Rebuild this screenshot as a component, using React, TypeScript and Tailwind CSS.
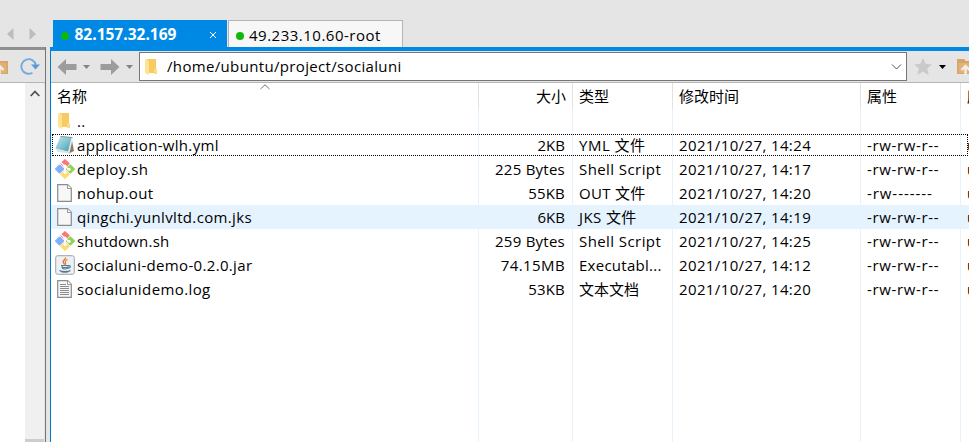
import type { ReactNode } from "react";

const font = "font-['Open_Sans','Noto_Sans_CJK_SC',sans-serif]";

type Kind = "folder" | "yml" | "git" | "blank" | "jar" | "log";
type Row = {
  kind: Kind;
  name: string;
  nameTrack: string;
  size?: string;
  sizeTrack?: string;
  type?: string;
  typeTrack?: string;
  date?: string;
  attr?: string;
  attrTrack?: string;
  hot?: boolean;
  focus?: boolean;
};

const rows: Row[] = [
  { kind: "folder", name: "..", nameTrack: "tracking-[0.3px]" },
  { kind: "yml", name: "application-wlh.yml", nameTrack: "tracking-[0.32px]", size: "2KB", type: "YML 文件", typeTrack: "tracking-[0.5px]", date: "2021/10/27, 14:24", attr: "-rw-rw-r--", attrTrack: "tracking-[0.65px]", focus: true },
  { kind: "git", name: "deploy.sh", nameTrack: "tracking-[0.45px]", size: "225 Bytes", sizeTrack: "tracking-[0.25px]", type: "Shell Script", typeTrack: "tracking-[0.42px]", date: "2021/10/27, 14:17", attr: "-rw-rw-r--", attrTrack: "tracking-[0.65px]" },
  { kind: "blank", name: "nohup.out", nameTrack: "tracking-[0.35px]", size: "55KB", sizeTrack: "tracking-[0.2px]", type: "OUT 文件", typeTrack: "tracking-[0.3px]", date: "2021/10/27, 14:20", attr: "-rw-------", attrTrack: "tracking-[0.93px]" },
  { kind: "blank", name: "qingchi.yunlvltd.com.jks", nameTrack: "tracking-[0.34px]", size: "6KB", type: "JKS 文件", typeTrack: "tracking-[0.4px]", date: "2021/10/27, 14:19", attr: "-rw-rw-r--", attrTrack: "tracking-[0.65px]", hot: true },
  { kind: "git", name: "shutdown.sh", nameTrack: "tracking-[0.2px]", size: "259 Bytes", sizeTrack: "tracking-[0.25px]", type: "Shell Script", typeTrack: "tracking-[0.42px]", date: "2021/10/27, 14:25", attr: "-rw-rw-r--", attrTrack: "tracking-[0.65px]" },
  { kind: "jar", name: "socialuni-demo-0.2.0.jar", nameTrack: "tracking-[0.33px]", size: "74.15MB", sizeTrack: "tracking-[0.4px]", type: "Executabl...", typeTrack: "tracking-[0.27px]", date: "2021/10/27, 14:12", attr: "-rw-rw-r--", attrTrack: "tracking-[0.65px]" },
  { kind: "log", name: "socialunidemo.log", nameTrack: "tracking-[0.4px]", size: "53KB", sizeTrack: "tracking-[0.2px]", type: "文本文档", date: "2021/10/27, 14:20", attr: "-rw-rw-r--", attrTrack: "tracking-[0.65px]" },
];

function Folder() {
  return (
    <svg width="14" height="18" viewBox="0 0 14 18" className="shrink-0">
      <path d="M3 1h9v14H3z" fill="#f5cb62" />
      <path d="M10 11h3v5h-3z" fill="#fbdc86" />
      <path d="M1 1l4 2v14l-4-2z" fill="#ffe394" />
    </svg>
  );
}

function FileIcon({ kind }: { kind: Kind }) {
  if (kind === "folder") return <Folder />;
  if (kind === "yml")
    return (
      <svg width="20" height="20" viewBox="0 0 20 20">
        <defs>
          <linearGradient id="note" x1="0" y1="0" x2="1" y2="1">
            <stop offset="0" stopColor="#c2e8ee" />
            <stop offset=".55" stopColor="#7cc2d0" />
            <stop offset="1" stopColor="#4796a6" />
          </linearGradient>
        </defs>
        <path d="M16.500 3l2.500 13-5 2.500-2-1z" fill="#8d7c68" />
        <path d="M6 1.500L18 2.500 14.500 18 3 17z" fill="#e3eaec" />
        <path d="M5.500 1.500L16.500 2.500 13 16.500.300 13.500z" fill="url(#note)" />
        <path d="M5.500 1.500l12 1" stroke="#8b9a9d" strokeWidth="1.200" />
        <path d="M.300 13.500l2.500 3.500 11 1-1-1.500z" fill="#d7e5e7" />
      </svg>
    );
  if (kind === "git")
    return (
      <svg width="20" height="20" viewBox="0 0 20 20">
        <g transform="rotate(45 10 10)">
          <rect x="2.700" y="2.700" width="7" height="7" rx="1" fill="#f87878" />
          <rect x="10.300" y="2.700" width="7" height="7" rx="1" fill="#8fd35b" />
          <rect x="2.700" y="10.300" width="7" height="7" rx="1" fill="#80b0ff" />
          <rect x="10.300" y="10.300" width="7" height="7" rx="1" fill="#ffda6e" />
        </g>
        <path d="M6 3.500l4 4v6M10 7.500l4 3" stroke="#fff" strokeWidth="1.300" fill="none" />
        <g fill="#fff">
          <circle cx="10" cy="7.200" r="1.600" />
          <circle cx="10" cy="13.500" r="1.600" />
          <circle cx="14" cy="10.300" r="1.600" />
        </g>
      </svg>
    );
  if (kind === "jar")
    return (
      <svg width="20" height="20" viewBox="0 0 20 20">
        <rect x=".7" y=".7" width="18.600" height="18.600" rx="2" fill="#edf1f4" stroke="#9aa5ae" />
        <path d="M10.500 2.500c1 2-4 3-2 5.500.7 1 1 1.200 1 1.700M12.500 4.500c-3 1.500-2.500 2.500-2 3.500.4.8 0 1.300-.3 1.700" stroke="#e8762d" strokeWidth="1.300" fill="none" />
        <path d="M6 10.500h7.500M7 10.700c0 3 .5 3.300 3 3.300s3-.6 3-3.300M7 12.500h5.500M13.200 10.800c3-.8 2.700 2.200-.2 2.400M4.500 15.500c2 1.500 9 1.500 11 0M6.500 17.200h6.500" stroke="#53778f" strokeWidth="1.100" fill="none" />
      </svg>
    );
  return (
    <svg width="15" height="18" viewBox="0 0 15 18">
      <path d="M.7.7h10l3.600 3.600v13H.7z" fill="#f7f7f7" stroke="#8c8c8c" strokeWidth="1.200" />
      <path d="M10.500.7v3.800h3.800" fill="#fff" stroke="#9a9a9a" />
      {kind === "log" && <path d="M3 4.500h6M3 6.500h9M3 8.500h9M3 10.500h9M3 12.500h9M3 14.500h9" stroke="#8b8b8b" />}
    </svg>
  );
}

function Arrow({ flip }: { flip?: boolean }) {
  return (
    <svg width="20" height="18" viewBox="0 0 20 18" className={flip ? "shrink-0 -scale-x-100" : "shrink-0"}>
      <path d="M.5 9L9 1v5h10.500v6H9v5z" fill="#9c9c9c" />
    </svg>
  );
}

function Caret({ color = "#858585" }: { color?: string }) {
  return (
    <svg width="7" height="4" viewBox="0 0 7 4" className="shrink-0">
      <path d="M0 0h7L3.500 4z" fill={color} />
    </svg>
  );
}

function UpFolder() {
  return (
    <svg width="18" height="17" viewBox="0 0 18 17" className="shrink-0">
      <path d="M0 1h7l2 2h8v13H0z" fill="#d9a566" />
      <path d="M1.500 5h14v10h-14z" fill="#e0b27a" />
      <path d="M8.500 17V9M4.500 12l4-4 4 4" stroke="#f2eee8" strokeWidth="2.400" fill="none" />
    </svg>
  );
}

function Dot() {
  return <span className="mt-1 size-2 shrink-0 rounded-full bg-[#0cb80c]" />;
}

function Line({ children, className = "" }: { children?: ReactNode; className?: string }) {
  return <div className={`h-full shrink-0 whitespace-pre border-l ${className}`}>{children}</div>;
}

export default function App() {
  return (
    <div className={`flex h-[442px] w-[969px] flex-col overflow-hidden bg-[#e5e5e5] text-[15px] text-black ${font}`}>
      <div className="flex h-[47px] shrink-0 items-end">
        <div className="flex h-[27px] w-[53px] items-center gap-[15px] pl-[7px]">
          <svg width="7" height="12" viewBox="0 0 7 12"><path d="M6.500 0v12L0 6z" fill="#bdbdbd" /></svg>
          <svg width="7" height="12" viewBox="0 0 7 12"><path d="M.5 0v12L7 6z" fill="#bdbdbd" /></svg>
        </div>
        <div className="flex h-[27px] w-[174px] items-center bg-[#0089e4] pl-2 text-white">
          <Dot />
          <span className="ml-[5.500px] w-[134.500px] pt-0.5 text-[15.500px] font-bold">82.157.32.169</span>
          <svg width="8" height="8" viewBox="0 0 8 8" className="mt-[3px]"><path d="M1 1l6 6M7 1L1 7" stroke="#fff" /></svg>
        </div>
        <div className="ml-px flex h-[27px] w-[175px] items-center border-x border-t border-[#b5b5b5] bg-[#f7f7f7] pl-[7px]">
          <Dot />
          <span className="ml-[5px] pt-[3px] tracking-[0.5px]">49.233.10.60-root</span>
        </div>
      </div>

      <div className="flex min-h-0 flex-1">
        <div className="flex w-[46px] shrink-0 flex-col border-r border-[#747474]">
          <div className="h-[3px] shrink-0 bg-[#909090]" />
          <div className="flex h-[33px] shrink-0 items-center gap-[11px] border-b border-[#b5b5b5]">
            <div className="flex w-[9px] shrink-0 justify-end overflow-hidden"><UpFolder /></div>
            <svg width="20" height="18" viewBox="0 0 20 18" className="shrink-0">
              <path d="M12.500 15.700A7.300 7.300 0 1 1 15.800 8" stroke="#74a9dc" strokeWidth="1.900" fill="none" />
              <path d="M11 7.500h9l-4.500 5z" fill="#5c99d5" />
            </svg>
          </div>
          <div className="flex flex-1">
            <div className="w-[25px] bg-white" />
            <div className="flex w-[19px] flex-col items-center justify-between bg-[#f0f0f0] pt-[7px]">
              <svg width="10" height="7" viewBox="0 0 10 7"><path d="M.7 6L5 1.500 9.300 6" stroke="#505050" strokeWidth="1.800" fill="none" /></svg>
              <div className="h-[3px] w-full bg-[#cdcdcd]" />
            </div>
          </div>
        </div>
        <div className="w-1 shrink-0" />

        <div className="flex w-[919px] shrink-0 flex-col border-l border-[#0078c8]">
          <div className="-ml-px h-1 shrink-0 bg-[#0089e4]" />
          <div className="flex h-8 shrink-0 items-center border-b border-[#b5b5b5] pl-[6px]">
            <Arrow />
            <span className="ml-[6px] mr-[10px] shrink-0"><Caret /></span>
            <Arrow flip />
            <span className="ml-[6px] mr-[6px] shrink-0"><Caret /></span>
            <div className="flex h-[29px] w-[768px] shrink-0 items-center border border-[#767676] bg-white pl-[4px]">
              <Folder />
              <span className="ml-[9px] w-[724px] tracking-[0.34px]">/home/ubuntu/project/socialuni</span>
              <svg width="11" height="6" viewBox="0 0 11 6" className="shrink-0"><path d="M1 .5l4.500 4.500L10 .5" stroke="#505050" fill="none" /></svg>
            </div>
            <svg width="18" height="17" viewBox="0 0 18 17" className="ml-[7px] shrink-0"><path d="M9 0l2.600 5.800 6.400.6-4.800 4.200 1.500 6.400L9 13.700 3.300 17l1.500-6.400L0 6.400l6.400-.6z" fill="#cacaca" /></svg>
            <span className="ml-[7px] mr-[11px] shrink-0"><Caret color="#000" /></span>
            <UpFolder />
          </div>

          <div className="relative flex min-h-0 flex-1 flex-col bg-white">
            <svg width="10" height="6" viewBox="0 0 10 6" className="absolute left-[209px] top-px"><path d="M.5 5L5 .8 9.500 5" stroke="#707070" fill="none" /></svg>
            <div className="flex h-[26px] shrink-0 items-center leading-[26px]">
              <div className="w-[427px] shrink-0 pl-[6px]">名称</div>
              <Line className="w-[94px] border-[#e2e2e2] pr-[6px] text-right">大小</Line>
              <Line className="w-[100px] border-[#e2e2e2] pl-[6px]">类型</Line>
              <Line className="w-[188px] border-[#e2e2e2] pl-[6px]">修改时间</Line>
              <Line className="w-[100px] border-[#e2e2e2] pl-[6px]">属性</Line>
              <Line className="w-[100px] border-[#e2e2e2] pl-[6px]">所有者</Line>
            </div>
            {rows.map((r) => (
              <div key={r.name} className={`relative flex h-6 shrink-0 items-center leading-6 ${r.hot ? "bg-[#e5f3ff]" : ""}`}>
                <div className="flex h-full w-[427px] shrink-0 items-center pl-[4px]">
                  <div className="flex w-[22px] shrink-0 items-center">
                    <span className={r.kind === "folder" || r.kind === "blank" || r.kind === "log" ? "ml-[2px]" : ""}><FileIcon kind={r.kind} /></span>
                  </div>
                  <span className={`whitespace-pre ${r.nameTrack}`}>{r.name}</span>
                </div>
                <Line className={`w-[94px] border-[#e8f2fd] pr-[7px] text-right ${r.sizeTrack ?? ""}`}>{r.size}</Line>
                <Line className={`w-[100px] border-[#e8f2fd] pl-[6px] ${r.typeTrack ?? ""}`}>{r.type}</Line>
                <Line className="w-[188px] border-[#e8f2fd] pl-[6px] tracking-[0.38px]">{r.date}</Line>
                <Line className={`w-[100px] border-[#e8f2fd] pl-[6px] ${r.attrTrack ?? ""}`}>{r.attr}</Line>
                <Line className="w-[100px] border-[#e8f2fd] pl-[6px]">{r.attr ? "ubuntu" : ""}</Line>
                {r.focus && <div className="absolute left-px top-px h-[22px] w-[916px] border border-dotted border-black" />}
              </div>
            ))}
            <div className="flex flex-1">
              <div className="w-[427px] shrink-0" />
              <Line className="w-[94px] border-[#e8f2fd]" />
              <Line className="w-[100px] border-[#e8f2fd]" />
              <Line className="w-[188px] border-[#e8f2fd]" />
              <Line className="w-[100px] border-[#e8f2fd]" />
              <Line className="w-[9px] border-[#e8f2fd]" />
            </div>
          </div>
        </div>
      </div>
    </div>
  );
}
